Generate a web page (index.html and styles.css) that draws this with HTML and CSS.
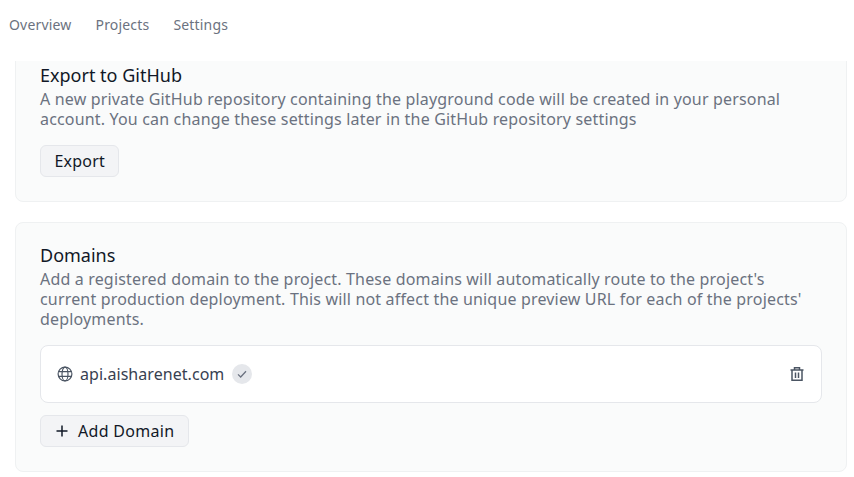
FILE: index.html
```html
<!DOCTYPE html>
<html lang="en">
<head>
<meta charset="utf-8">
<title>Project settings</title>
<link rel="stylesheet" href="styles.css">
</head>
<body>
<nav class="nav">
  <a class="nav-link">Overview</a>
  <a class="nav-link">Projects</a>
  <a class="nav-link">Settings</a>
</nav>
<main class="main">
  <div class="content">
    <section class="card">
      <h2 class="card-title">Export to GitHub</h2>
      <p class="card-desc">A new private GitHub repository containing the playground code will be created in your personal account. You can change these settings later in the GitHub repository settings</p>
      <button class="btn">Export</button>
    </section>
    <section class="card">
      <h2 class="card-title">Domains</h2>
      <p class="card-desc">Add a registered domain to the project. These domains will automatically route to the project's current production deployment. This will not affect the unique preview URL for each of the projects' deployments.</p>
      <div class="domain-row">
        <div class="domain-info">
          <svg class="icon globe" viewBox="0 0 16 16" fill="none" stroke="currentColor" stroke-width="1.2"><circle cx="8" cy="8" r="6.9"/><ellipse cx="8" cy="8" rx="3" ry="6.9"/><path d="M1.6 5.6h12.8M1.6 10.4h12.8"/></svg>
          <span class="domain-name">api.aisharenet.com</span>
          <span class="badge"><svg viewBox="0 0 12 12" fill="none" stroke="currentColor" stroke-width="1.3"><path d="M2 6.4l2.7 2.6L10 3.2"/></svg></span>
        </div>
        <svg class="icon trash" viewBox="0 0 16 16" fill="none" stroke="currentColor" stroke-width="1.5"><path d="M1.5 4h13M5.5 4V1.7h5V4M3 4v10.3h10V4M6.5 6.5v5.5M9.5 6.5v5.5"/></svg>
      </div>
      <button class="btn btn-add">
        <svg class="plus" viewBox="0 0 14 14" fill="none" stroke="currentColor" stroke-width="1.5"><path d="M7 1.5v11M1.5 7h11"/></svg>
        Add Domain
      </button>
    </section>
  </div>
</main>
</body>
</html>
```

FILE: styles.css
```css
* { box-sizing: border-box; }
html, body { height: 100%; }
body {
  margin: 0;
  background: #fff;
  font-family: "Noto Sans", "Open Sans", sans-serif;
  font-size: 16px;
  overflow: hidden;
  display: flex;
  flex-direction: column;
}
.nav {
  height: 61px;
  flex: none;
  display: flex;
  gap: 24px;
  align-items: center;
  padding: 0 9px 12px;
  font-size: 14px;
  letter-spacing: 0.18px;
}
.nav-link { color: #6b7280; }
.main { flex: 1; min-height: 0; overflow: hidden; }
.content {
  margin-top: -19px;
  padding: 0 7px 0 15px;
  display: flex;
  flex-direction: column;
  gap: 20px;
}
.card {
  background: #fafbfb;
  border: 1px solid #eff1f2;
  border-radius: 8px;
  padding: 21px 24px 24px;
}
.card-title {
  margin: 0 0 3px;
  font-size: 18px;
  line-height: 22px;
  font-weight: 400;
  color: #111827;
}
.card-desc {
  margin: 0 0 16px;
  max-width: 768px;
  font-size: 16px;
  line-height: 20px;
  letter-spacing: 0.17px;
  color: #6b7280;
}
.btn {
  display: flex;
  align-items: center;
  height: 32px;
  padding: 0 13.5px;
  font: inherit;
  letter-spacing: 0.2px;
  color: #111827;
  background: #f3f4f6;
  border: 1px solid #e5e7eb;
  border-radius: 6px;
}
.btn-add { gap: 9px; padding: 0 14px; letter-spacing: 0.3px; }
.plus { width: 14px; height: 14px; }
.domain-row {
  height: 58px;
  margin-bottom: 12px;
  padding: 0 16px;
  display: flex;
  align-items: center;
  justify-content: space-between;
  background: #fff;
  border: 1px solid #e5e7eb;
  border-radius: 8px;
}
.domain-info { display: flex; align-items: center; }
.icon { width: 16px; height: 16px; color: #4b5563; }
.domain-name { margin-left: 7px; color: #374151; letter-spacing: 0.05px; }
.badge {
  margin-left: 8px;
  width: 20px;
  height: 20px;
  border-radius: 50%;
  background: #e5e7eb;
  color: #6b7280;
  display: flex;
  align-items: center;
  justify-content: center;
}
.badge svg { width: 12px; height: 12px; }
```
